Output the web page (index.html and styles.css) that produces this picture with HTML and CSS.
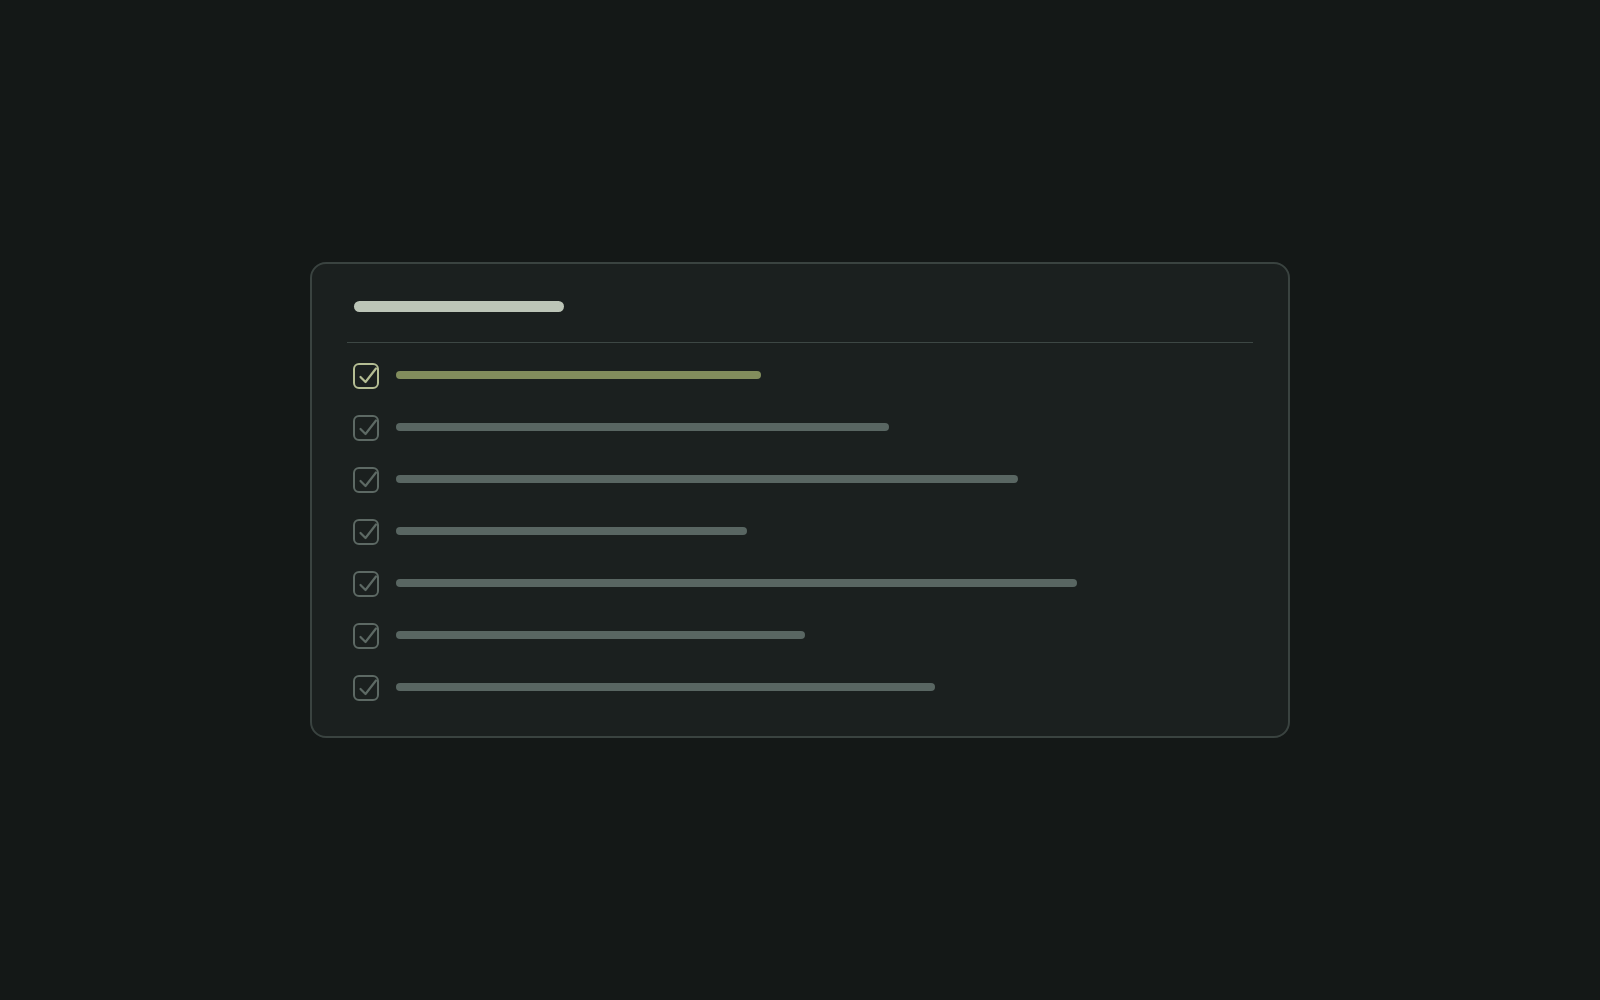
FILE: index.html
```html
<!DOCTYPE html>
<html lang="en">
<head>
<meta charset="utf-8">
<title>Checklist</title>
<link rel="stylesheet" href="styles.css">
</head>
<body>
<main class="stage">
  <section class="card">
    <div class="card-title"></div>
    <hr class="divider">
    <ul class="list">
      <li class="item is-active">
        <span class="check"><svg viewBox="0 0 26 26"><path d="M7.5 14 L12.5 19 L23 5.5"/></svg></span>
        <span class="line" style="width:365px"></span>
      </li>
      <li class="item">
        <span class="check"><svg viewBox="0 0 26 26"><path d="M7.5 14 L12.5 19 L23 5.5"/></svg></span>
        <span class="line" style="width:493px"></span>
      </li>
      <li class="item">
        <span class="check"><svg viewBox="0 0 26 26"><path d="M7.5 14 L12.5 19 L23 5.5"/></svg></span>
        <span class="line" style="width:622px"></span>
      </li>
      <li class="item">
        <span class="check"><svg viewBox="0 0 26 26"><path d="M7.5 14 L12.5 19 L23 5.5"/></svg></span>
        <span class="line" style="width:351px"></span>
      </li>
      <li class="item">
        <span class="check"><svg viewBox="0 0 26 26"><path d="M7.5 14 L12.5 19 L23 5.5"/></svg></span>
        <span class="line" style="width:681px"></span>
      </li>
      <li class="item">
        <span class="check"><svg viewBox="0 0 26 26"><path d="M7.5 14 L12.5 19 L23 5.5"/></svg></span>
        <span class="line" style="width:409px"></span>
      </li>
      <li class="item">
        <span class="check"><svg viewBox="0 0 26 26"><path d="M7.5 14 L12.5 19 L23 5.5"/></svg></span>
        <span class="line" style="width:539px"></span>
      </li>
    </ul>
  </section>
</main>
</body>
</html>
```

FILE: styles.css
```css
* { box-sizing: border-box; }

html, body {
  margin: 0;
  height: 100%;
  background: #141817;
  font-family: "Liberation Sans", Arial, sans-serif;
}

.stage {
  height: 100vh;
  display: flex;
  align-items: center;
  justify-content: center;
}

.card {
  width: 980px;
  height: 476px;
  background: #1b201f;
  border: 2px solid #3a4340;
  border-radius: 16px;
  padding: 37px 35px 35px;
  display: flex;
  flex-direction: column;
}

.card-title {
  width: 210px;
  height: 11px;
  margin-left: 7px;
  border-radius: 6px;
  background: #bcc5b7;
}

.divider {
  margin: 30px 0 20px;
  border: 0;
  height: 1px;
  background: #3d4744;
}

.list {
  list-style: none;
  margin: 0;
  padding: 0 0 0 6px;
  display: flex;
  flex-direction: column;
  gap: 26px;
}

.item {
  display: flex;
  align-items: center;
  gap: 17px;
  height: 26px;
}

.check {
  flex: none;
  width: 26px;
  height: 26px;
  border: 2px solid #5d6964;
  border-radius: 6px;
  position: relative;
}

.check svg {
  position: absolute;
  left: -2px;
  top: -2px;
  width: 26px;
  height: 26px;
  fill: none;
  stroke: #5d6964;
  stroke-width: 2.2;
  stroke-linecap: round;
  stroke-linejoin: round;
}

.line {
  height: 8px;
  margin-top: -2px;
  border-radius: 4px;
  background: #596662;
}

.is-active .check { border-color: #b4bd93; }

.is-active .check svg { stroke: #b4bd93; }

.is-active .line { background: #828d5d; }
```
